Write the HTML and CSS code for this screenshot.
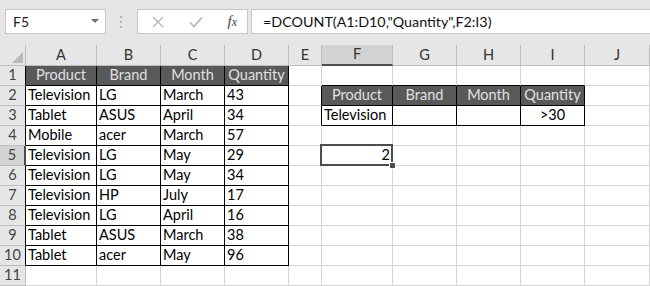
FILE: index.html
```html
<!DOCTYPE html>
<html lang="en">
<head>
  <meta charset="UTF-8" />
  <title>DCOUNT - Sheet1</title>
  <link rel="stylesheet" href="styles.css">
</head>
<body>

<div class="formula-bar">
  <div class="name-box">
    <span>F5</span>
    <svg class="arrow" width="8" height="5" viewBox="0 0 8 5"><path d="M0 0h8L4 4z" fill="#6d6d6d"/></svg>
  </div>
  <div class="grip">
    <svg width="3" height="12" viewBox="0 0 3 12"><rect x="0" y="0" width="2" height="2" fill="#b5b5b5"/><rect x="0" y="5" width="2" height="2" fill="#b5b5b5"/><rect x="0" y="10" width="2" height="2" fill="#b5b5b5"/></svg>
  </div>
  <div class="fn-box">
    <svg class="fn-icon" width="12" height="12" viewBox="0 0 12 12"><path d="M1 1l10 10M11 1L1 11" stroke="#b3b3b3" stroke-width="1.3" fill="none"/></svg>
    <svg class="fn-icon" width="14" height="12" viewBox="0 0 14 12"><path d="M1 6.5l4 4L13 1.5" stroke="#b3b3b3" stroke-width="1.6" fill="none"/></svg>
    <span class="fx">f<i>x</i></span>
  </div>
  <div class="formula-input">=DCOUNT(A1:D10,"Quantity",F2:I3)</div>
</div>

<table class="sheet">
  <colgroup>
    <col class="c-rh"><col class="c-wide"><col class="c-std"><col class="c-std"><col class="c-std"><col class="c-narrow"><col class="c-wide"><col class="c-std"><col class="c-std"><col class="c-std"><col class="c-last">
  </colgroup>
  <tr class="col-heads">
    <th class="corner"><svg width="11" height="11" viewBox="0 0 11 11"><path d="M11 0v11H0z" fill="#b9b9b9"/></svg></th>
    <th>A</th><th>B</th><th>C</th><th>D</th><th>E</th><th class="sel-col crit-top">F</th><th class="crit-top">G</th><th class="crit-top">H</th><th class="crit-top">I</th><th>J</th>
  </tr>
  <tr>
    <th class="rh data-left">1</th>
    <td class="db head">Product</td><td class="db head">Brand</td><td class="db head">Month</td><td class="db head">Quantity</td>
    <td></td><td class="crit-top"></td><td class="crit-top"></td><td class="crit-top"></td><td class="crit-top"></td><td></td>
  </tr>
  <tr>
    <th class="rh data-left">2</th>
    <td class="db">Television</td><td class="db">LG</td><td class="db">March</td><td class="db">43</td>
    <td class="crit-left"></td><td class="db head">Product</td><td class="db head">Brand</td><td class="db head">Month</td><td class="db head">Quantity</td><td></td>
  </tr>
  <tr>
    <th class="rh data-left">3</th>
    <td class="db">Tablet</td><td class="db">ASUS</td><td class="db">April</td><td class="db">34</td>
    <td class="crit-left"></td><td class="db">Television</td><td class="db"></td><td class="db"></td><td class="db center">&gt;30</td><td></td>
  </tr>
  <tr>
    <th class="rh data-left">4</th>
    <td class="db">Mobile</td><td class="db">acer</td><td class="db">March</td><td class="db">57</td>
    <td></td><td></td><td></td><td></td><td></td><td></td>
  </tr>
  <tr>
    <th class="rh data-left sel-row">5</th>
    <td class="db">Television</td><td class="db">LG</td><td class="db">May</td><td class="db">29</td>
    <td></td><td class="active-cell num">2</td><td></td><td></td><td></td><td></td>
  </tr>
  <tr>
    <th class="rh data-left">6</th>
    <td class="db">Television</td><td class="db">LG</td><td class="db">May</td><td class="db">34</td>
    <td></td><td></td><td></td><td></td><td></td><td></td>
  </tr>
  <tr>
    <th class="rh data-left">7</th>
    <td class="db">Television</td><td class="db">HP</td><td class="db">July</td><td class="db">17</td>
    <td></td><td></td><td></td><td></td><td></td><td></td>
  </tr>
  <tr>
    <th class="rh data-left">8</th>
    <td class="db">Television</td><td class="db">LG</td><td class="db">April</td><td class="db">16</td>
    <td></td><td></td><td></td><td></td><td></td><td></td>
  </tr>
  <tr>
    <th class="rh data-left">9</th>
    <td class="db">Tablet</td><td class="db">ASUS</td><td class="db">March</td><td class="db">38</td>
    <td></td><td></td><td></td><td></td><td></td><td></td>
  </tr>
  <tr>
    <th class="rh data-left">10</th>
    <td class="db">Tablet</td><td class="db">acer</td><td class="db">May</td><td class="db">96</td>
    <td></td><td></td><td></td><td></td><td></td><td></td>
  </tr>
  <tr>
    <th class="rh">11</th>
    <td></td><td></td><td></td><td></td><td></td><td></td><td></td><td></td><td></td><td></td>
  </tr>
</table>

</body>
</html>
```

FILE: styles.css
```css
body {
  margin: 0;
  padding: 0;
  background: #fff;
  font-family: Lato, "Open Sans", sans-serif;
  overflow: hidden;
}

.formula-bar {
  display: flex;
  align-items: center;
  height: 45px;
  padding: 0 0 2px 5px;
  box-sizing: border-box;
  background: #e6e6e6;
}

.name-box {
  display: flex;
  align-items: center;
  justify-content: space-between;
  width: 101px;
  height: 25px;
  padding: 0 6px 0 7px;
  box-sizing: border-box;
  background: #fff;
  border: 1px solid #c6c6c6;
  font-size: 14px;
  color: #222;
}

.grip {
  display: flex;
  align-items: center;
  justify-content: center;
  width: 31px;
  height: 25px;
}

.fn-box {
  display: flex;
  align-items: center;
  justify-content: space-between;
  width: 111px;
  height: 25px;
  padding: 0 10px 0 14px;
  box-sizing: border-box;
  background: #fff;
  border: 1px solid #c6c6c6;
}

.fx {
  font-family: "Liberation Serif", serif;
  font-style: italic;
  font-size: 15px;
  color: #444;
}

.fx i {
  font-size: 12px;
}

.formula-input {
  flex: 1;
  height: 25px;
  margin-left: 3px;
  padding-left: 11px;
  box-sizing: border-box;
  background: #fff;
  border: 1px solid #c6c6c6;
  border-right: none;
  font-size: 14.3px;
  line-height: 23px;
  color: #111;
  white-space: nowrap;
}

.sheet {
  table-layout: fixed;
  border-collapse: separate;
  border-spacing: 0;
  width: 650px;
  font-size: 14.5px;
  color: #000;
}

.c-rh { width: 26px; }
.c-wide { width: 71px; }
.c-std { width: 64px; }
.c-narrow { width: 33px; }
.c-last { width: 65px; }

.sheet td,
.sheet th {
  box-sizing: border-box;
  height: 20px;
  padding: 0 2px 1px;
  border-right: 1px solid #d4d4d4;
  border-bottom: 1px solid #d4d4d4;
  line-height: 18px;
  white-space: nowrap;
  overflow: hidden;
  text-align: left;
  vertical-align: bottom;
  font-weight: normal;
}

.col-heads th {
  background: #e6e6e6;
  text-align: center;
  color: #333;
  border-right-color: #bdbdbd;
  border-bottom-color: #bdbdbd;
}

.col-heads th.corner {
  text-align: right;
  vertical-align: bottom;
  padding: 0 2px 2px 0;
  line-height: 0;
}

.sheet th.rh {
  background: #e6e6e6;
  text-align: center;
  color: #444;
  padding: 0 0 1px;
  border-right-color: #bdbdbd;
  border-bottom-color: #bdbdbd;
}

.sheet th.data-left {
  border-right-color: #000;
}

.sheet th.sel-row {
  background: #d2d2d2;
  border-right: 2px solid #4d4d4d;
}

.col-heads th.sel-col {
  background: #d2d2d2;
  border-bottom: 2px solid #4d4d4d;
}

.sheet td.db {
  border-right-color: #000;
  border-bottom-color: #000;
}

.sheet td.head {
  background: #595959;
  color: #e0e0e0;
  text-align: center;
}

.sheet .crit-top {
  border-bottom-color: #000;
}

.col-heads th.crit-top {
  border-bottom-color: #bdbdbd;
}

.col-heads th.sel-col.crit-top {
  border-bottom-color: #4d4d4d;
}

.sheet td.crit-left {
  border-right-color: #000;
}

.sheet td.center {
  text-align: center;
}

.sheet td.num {
  text-align: right;
}

.active-cell {
  position: relative;
  overflow: visible !important;
}

.active-cell::before {
  content: "";
  position: absolute;
  left: -2px;
  top: -2px;
  right: -1px;
  bottom: -1px;
  border: 2px solid #4d4d4d;
}

.active-cell::after {
  content: "";
  position: absolute;
  right: -4px;
  bottom: -4px;
  width: 5px;
  height: 5px;
  background: #4d4d4d;
  border: 1px solid #fff;
}
```
